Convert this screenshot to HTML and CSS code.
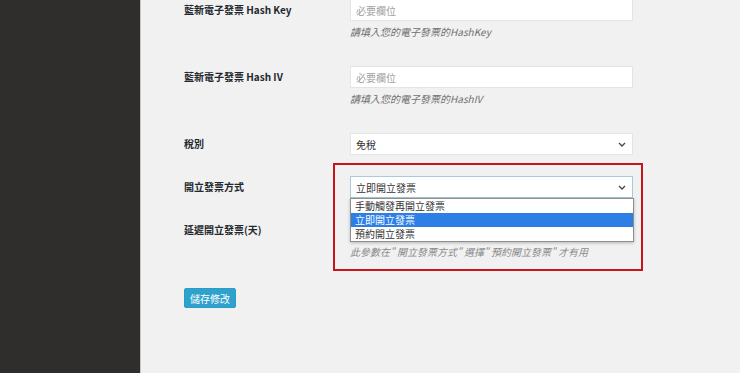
FILE: index.html
```html
<!DOCTYPE html>
<html lang="zh-Hant">
<head>
  <meta charset="UTF-8">
  <meta name="viewport" content="width=device-width, initial-scale=1.0">
  <title>藍新電子發票設定</title>
  <link rel="stylesheet" href="styles.css">
</head>
<body>
  <div class="layout">
    <aside class="sidebar"></aside>

    <main class="content">
      <form class="settings">
        <div class="row">
          <label class="row-label">藍新電子發票 Hash Key</label>
          <div class="row-field">
            <input class="text-input" type="text" placeholder="必要欄位">
            <p class="desc">請填入您的電子發票的HashKey</p>
          </div>
        </div>

        <div class="row">
          <label class="row-label">藍新電子發票 Hash IV</label>
          <div class="row-field">
            <input class="text-input" type="text" placeholder="必要欄位">
            <p class="desc">請填入您的電子發票的HashIV</p>
          </div>
        </div>

        <div class="row">
          <label class="row-label">稅別</label>
          <div class="row-field">
            <div class="select">
              <span>免稅</span>
              <svg class="chevron" width="8" height="5" viewBox="0 0 8 5"><path d="M1 1l3 3 3-3" fill="none" stroke="#444" stroke-width="1.3"/></svg>
            </div>
          </div>
        </div>

        <div class="row">
          <label class="row-label">開立發票方式</label>
          <div class="row-field">
            <div class="highlight"></div>
            <div class="select select-open">
              <span>立即開立發票</span>
              <svg class="chevron" width="8" height="5" viewBox="0 0 8 5"><path d="M1 1l3 3 3-3" fill="none" stroke="#444" stroke-width="1.3"/></svg>
            </div>
            <ul class="options">
              <li>手動觸發再開立發票</li>
              <li class="active">立即開立發票</li>
              <li>預約開立發票</li>
            </ul>
          </div>
        </div>

        <div class="row">
          <label class="row-label">延遲開立發票(天)</label>
          <div class="row-field">
            <input class="text-input" type="text">
            <p class="desc desc-light">此參數在" 開立發票方式" 選擇" 預約開立發票" 才有用</p>
          </div>
        </div>

        <button class="save-btn" type="button">儲存修改</button>
      </form>
    </main>
  </div>
</body>
</html>
```

FILE: styles.css
```css
* {
  box-sizing: border-box;
}
body {
  margin: 0;
  font-family: "Noto Sans CJK TC", "Noto Sans", sans-serif;
  background: #f1f1f1;
  color: #23282d;
}
.layout {
  display: flex;
  height: 373px;
  overflow: hidden;
}
.sidebar {
  width: 141px;
  flex-shrink: 0;
  background: #302e2c;
  border-right: 1px solid #c4c4c4;
}
.content {
  flex: 1;
  background: #f1f1f1;
  padding-left: 43px;
}
.settings {
  margin-top: -1px;
}
.row {
  display: grid;
  grid-template-columns: 166px 283px;
  padding-bottom: 21px;
}
.row-label {
  font-size: 10px;
  font-weight: bold;
  line-height: 22px;
  color: #23282d;
}
.row-field {
  position: relative;
}
.text-input {
  display: block;
  width: 100%;
  height: 22px;
  padding: 0 5px;
  border: 1px solid #e4e4e4;
  background: #fff;
  font-family: inherit;
  font-size: 10px;
  color: #333;
  outline: none;
}
.text-input::placeholder {
  color: #a0a0a0;
}
.desc {
  margin: 3px 0 5px;
  font-size: 10px;
  line-height: 16px;
  font-style: italic;
  color: #707070;
}
.desc-light {
  color: #8a8a8a;
}
.select {
  display: flex;
  align-items: center;
  justify-content: space-between;
  height: 22px;
  padding: 0 5px;
  background: #fff;
  border: 1px solid #e4e4e4;
  font-size: 10px;
  color: #333;
}
.select-open {
  border-color: #a9cbd9;
}
.chevron {
  margin-right: 1px;
}
.options {
  position: absolute;
  top: 22px;
  left: 0;
  width: 284px;
  margin: 0;
  padding: 0;
  list-style: none;
  background: #fff;
  border: 1px solid #8f8f8f;
  box-shadow: 0 1px 3px rgba(0, 0, 0, 0.25);
  z-index: 2;
}
.options li {
  height: 14px;
  line-height: 14px;
  padding: 0 4px;
  font-size: 10px;
  color: #333;
}
.options li.active {
  background: #2d7fe6;
  color: #fff;
}
.highlight {
  position: absolute;
  left: -17px;
  top: -13px;
  width: 310px;
  height: 108px;
  border: 2px solid #c8141c;
  z-index: 1;
  pointer-events: none;
}
.save-btn {
  display: block;
  margin-top: 2px;
  width: 52px;
  height: 20px;
  padding: 0;
  background: #2ea2cc;
  border: 1px solid #2a9cc6;
  border-radius: 2px;
  color: #fff;
  font-family: inherit;
  font-size: 10px;
}
```
